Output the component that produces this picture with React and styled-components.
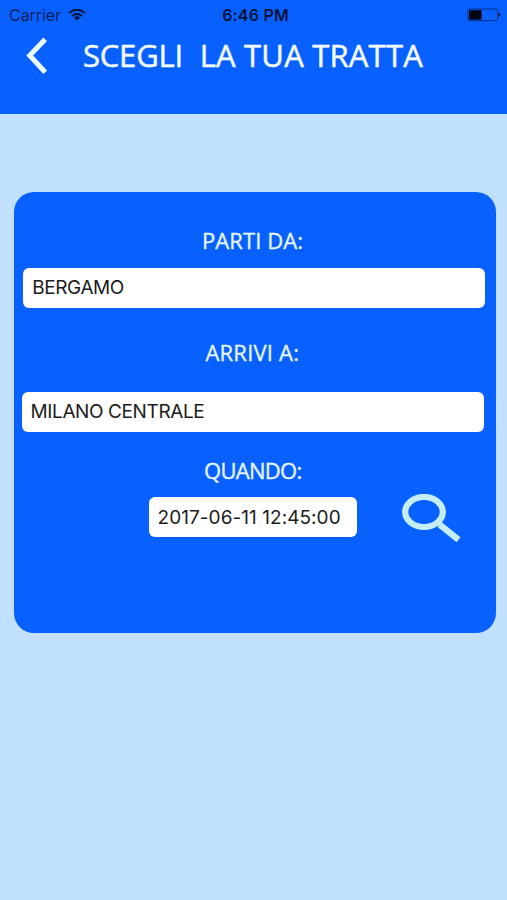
import React from "react";
import styled, { createGlobalStyle } from "styled-components";

const GlobalStyle = createGlobalStyle`
  * { box-sizing: border-box; }
  body { margin: 0; background: #c1e0fe; }
`;

const Screen = styled.div`
  display: flex;
  flex-direction: column;
  width: 507px;
  height: 900px;
  overflow: hidden;
  background: #c1e0fe;
`;

const Header = styled.header`
  height: 114px;
  background: #0860ff;
  flex: none;
`;

const StatusBar = styled.div`
  display: grid;
  grid-template-columns: 1fr auto 1fr;
  align-items: center;
  height: 30px;
  padding: 0 6px 0 9px;
  font: 400 16px/30px Inter, sans-serif;
  color: #04205c;
`;

const Carrier = styled.div`
  display: flex;
  align-items: center;
  gap: 7px;
  letter-spacing: -0.05px;
`;

const Clock = styled.div`
  font-weight: 600;
  letter-spacing: 0.2px;
  color: #021338;
  padding-left: 1px;
`;

const BatterySlot = styled.div`
  display: flex;
  justify-content: flex-end;
`;

const NavBar = styled.div`
  display: flex;
  align-items: center;
  height: 51px;
  padding-left: 26px;
`;

const BackButton = styled.button`
  display: flex;
  width: 22px;
  padding: 0;
  border: 0;
  background: none;
`;

const Title = styled.h1`
  margin: -2px 0 0 35px;
  font: 400 31px/50px "Open Sans", sans-serif;
  font-kerning: none;
  letter-spacing: 0.2px;
  white-space: pre;
  color: #f2faff;
  -webkit-text-stroke: 0.5px #f2faff;
`;

const TitleLead = styled.span`
  letter-spacing: -0.2px;
  word-spacing: 0.5px;
`;

const Card = styled.main`
  display: flex;
  flex-direction: column;
  width: 482px;
  height: 441px;
  margin: 78.4px 0 0 14.4px;
  padding: 33px 0 0 7.6px;
  border-radius: 20px;
  background: #0860ff;
`;

const Label = styled.label`
  height: 30px;
  margin-top: ${(p) => p.$gap || 0}px;
  padding-left: ${(p) => p.$left}px;
  font: 400 22px/30px "Open Sans", sans-serif;
  letter-spacing: ${(p) => p.$tracking || 0}px;
  color: #e6f6ff;
  -webkit-text-stroke: 0.35px #e6f6ff;
`;

const Field = styled.input`
  display: block;
  width: ${(p) => p.$width || 462}px;
  height: 40px;
  margin: ${(p) => p.$gap || 0}px 0 0 ${(p) => p.$left || 0}px;
  padding: 0 0 0 9px;
  border: 0;
  border-radius: 6px;
  outline: 0;
  background: #fff;
  font: 400 19px/39px Inter, sans-serif;
  letter-spacing: ${(p) => p.$tracking || 0}px;
  color: #1c1c1c;
`;

const DateRow = styled.div`
  display: flex;
  align-items: flex-start;
`;

const SearchButton = styled.button`
  display: flex;
  margin: 9px 0 0 44px;
  padding: 0;
  border: 0;
  background: none;
`;

const WifiIcon = () => (
  <svg width="18" height="13" viewBox="0 0 18 13" fill="none" stroke="#021338" strokeWidth="2">
    <path d="M1 4.1C5.6-.3 12.4-.3 17 4.1M4 7.1c2.9-2.7 7.1-2.7 10 0" />
    <path d="M5.9 8.4c1.8-1.6 4.4-1.6 6.2 0L9 11.6z" fill="#021338" stroke="none" />
  </svg>
);

const BatteryIcon = () => (
  <svg width="34" height="14" viewBox="0 0 34 14">
    <rect x="0.9" y="1" width="29.6" height="11.6" rx="1.2" fill="none" stroke="#053087" />
    <rect x="2" y="2.2" width="12.6" height="9.4" fill="#000512" />
    <path d="M31.4 4.6c2.6.6 2.6 3.8 0 4.4z" fill="#03183f" />
  </svg>
);

const BackIcon = () => (
  <svg width="22" height="38" viewBox="0 0 22 38" fill="none" stroke="#e9fbff" strokeWidth="5">
    <path d="M19.2 2.2 3.7 18.5 19.2 35.2" />
  </svg>
);

const SearchIcon = () => (
  <svg width="60" height="50" viewBox="0 0 60 50" fill="none" stroke="#c3edf4">
    <ellipse cx="23" cy="18" rx="18.8" ry="15" strokeWidth="6.2" />
    <path d="M38.5 30.5 57.6 45.7" strokeWidth="6.2" />
    <path d="m35 27.5 5 4" strokeWidth="3" />
  </svg>
);

export default function App() {
  return (
    <Screen>
      <GlobalStyle />
      <Header>
        <StatusBar>
          <Carrier>Carrier<WifiIcon /></Carrier>
          <Clock>6:46 PM</Clock>
          <BatterySlot><BatteryIcon /></BatterySlot>
        </StatusBar>
        <NavBar>
          <BackButton aria-label="Indietro"><BackIcon /></BackButton>
          <Title><TitleLead>{"SCEGLI  "}</TitleLead>LA TUA TRATTA</Title>
        </NavBar>
      </Header>
      <Card>
        <Label htmlFor="from" $left={180} $tracking={0.1}>PARTI DA:</Label>
        <Field id="from" $gap={12.2} $left={1.2} $tracking={-0.4} defaultValue="BERGAMO" />
        <Label htmlFor="to" $gap={29.3} $left={183.5} $tracking={0.2}>ARRIVI A:</Label>
        <Field id="to" $gap={24.8} $left={-0.4} $tracking={-0.4} defaultValue="MILANO CENTRALE" />
        <Label htmlFor="when" $gap={22.9} $left={182} $tracking={-0.7}>QUANDO:</Label>
        <DateRow>
          <Field id="when" $gap={12.6} $left={126.6} $width={208} $tracking={0.05} defaultValue="2017-06-11 12:45:00" />
          <SearchButton aria-label="Cerca"><SearchIcon /></SearchButton>
        </DateRow>
      </Card>
    </Screen>
  );
}
